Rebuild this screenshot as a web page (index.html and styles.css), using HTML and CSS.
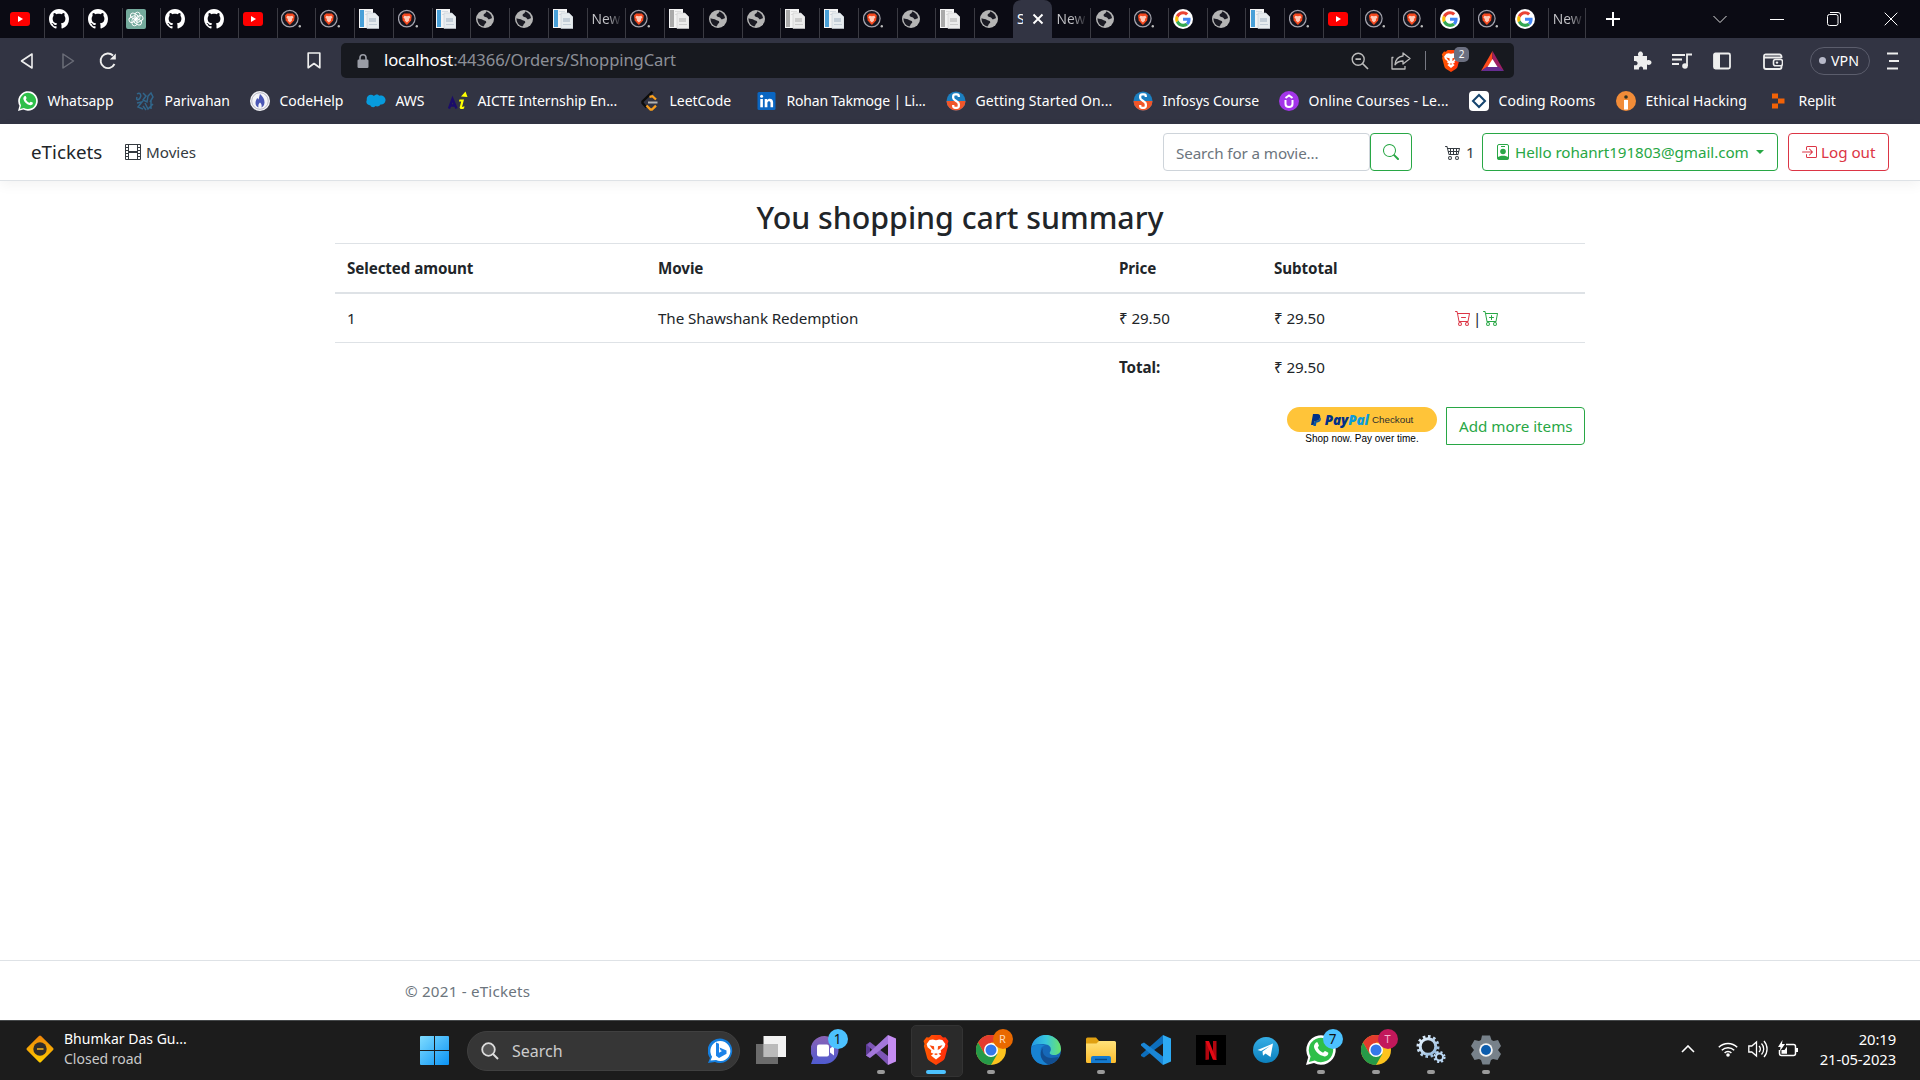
FILE: index.html
```html
<!DOCTYPE html>
<html lang="en">
<head>
<meta charset="utf-8">
<title>Shopping cart - eTickets</title>
<link rel="stylesheet" href="styles.css">
</head>
<body>
<svg class="defs" aria-hidden="true">
  <defs>
    <linearGradient id="g-win" x1="0" y1="0" x2="1" y2="1"><stop offset="0" stop-color="#7fdcff"/><stop offset="1" stop-color="#0a93f5"/></linearGradient>
    <linearGradient id="g-brave" x1="0" x2="1"><stop offset="0" stop-color="#ff5a00"/><stop offset="1" stop-color="#ff2a0c"/></linearGradient>
    <linearGradient id="g-chat" x1="0" y1="0" x2="0" y2="1"><stop offset="0" stop-color="#8a62b4"/><stop offset="1" stop-color="#4f5bd0"/></linearGradient>
    <linearGradient id="g-edge" x1="0" y1="0" x2="1" y2="0"><stop offset="0" stop-color="#2399e6"/><stop offset=".5" stop-color="#37c6dc"/><stop offset="1" stop-color="#6be36a"/></linearGradient>
    <linearGradient id="g-folder" x1="0" y1="0" x2="0" y2="1"><stop offset="0" stop-color="#ffe27a"/><stop offset="1" stop-color="#fcbc2c"/></linearGradient>
    <linearGradient id="g-tg" x1="0" y1="0" x2="0" y2="1"><stop offset="0" stop-color="#35aee6"/><stop offset="1" stop-color="#0c80bd"/></linearGradient>
    <linearGradient id="g-gear" x1="0" y1="0" x2="1" y2="1"><stop offset="0" stop-color="#e8f4ff"/><stop offset="1" stop-color="#8fb6dc"/></linearGradient>
    <linearGradient id="g-diamond" x1="0" y1="0" x2="1" y2="1"><stop offset="0" stop-color="#ee8209"/><stop offset="1" stop-color="#ffce00"/></linearGradient>
  </defs>
  <symbol id="yt" viewBox="0 0 20 20"><rect y="3" width="20" height="14" rx="3" fill="#f00"/><path d="M8 7l5 3-5 3z" fill="#fff"/></symbol>
  <symbol id="gh" viewBox="0 0 16 16"><path fill="#fff" d="M8 0C3.58 0 0 3.58 0 8c0 3.54 2.29 6.53 5.47 7.59.4.07.55-.17.55-.38 0-.19-.01-.82-.01-1.49-2.01.37-2.53-.49-2.69-.94-.09-.23-.48-.94-.82-1.13-.28-.15-.68-.52-.01-.53.63-.01 1.08.58 1.23.82.72 1.21 1.87.87 2.33.66.07-.52.28-.87.51-1.07-1.78-.2-3.64-.89-3.64-3.95 0-.87.31-1.59.82-2.15-.08-.2-.36-1.02.08-2.12 0 0 .67-.21 2.2.82.64-.18 1.32-.27 2-.27.68 0 1.36.09 2 .27 1.53-1.04 2.2-.82 2.2-.82.44 1.1.16 1.92.08 2.12.51.56.82 1.27.82 2.15 0 3.07-1.87 3.75-3.65 3.95.29.25.54.73.54 1.48 0 1.07-.01 1.93-.01 2.2 0 .21.15.46.55.38A8.013 8.013 0 0016 8c0-4.42-3.58-8-8-8z"/></symbol>
  <symbol id="gpt" viewBox="0 0 20 20"><rect width="20" height="20" rx="2" fill="#74aa9c"/><g fill="none" stroke="#fff" stroke-width=".9"><rect x="9" y="3.200" width="5" height="8" rx="2.500"/><rect x="9" y="3.200" width="5" height="8" rx="2.500" transform="rotate(60 10 10)"/><rect x="9" y="3.200" width="5" height="8" rx="2.500" transform="rotate(120 10 10)"/><rect x="9" y="3.200" width="5" height="8" rx="2.500" transform="rotate(180 10 10)"/><rect x="9" y="3.200" width="5" height="8" rx="2.500" transform="rotate(240 10 10)"/><rect x="9" y="3.200" width="5" height="8" rx="2.500" transform="rotate(300 10 10)"/></g></symbol>
  <symbol id="lion" viewBox="0 0 26 30"><path fill="url(#g-brave)" d="M6 2.500L8.500 0h9L20 2.500l2.500-.3L25.500 6l-1 3 .6 2-3.100 11.500c-.5 1.800-1.500 2.700-3 3.800L13 30l-6-3.700c-1.500-1.100-2.500-2-3-3.800L.9 11l.6-2-1-3L3.500 2.200z"/><path fill="#fff" d="M13 5.200l3.200-.7 3.200.5 3 4-1 3.300-3.700 3 .4 2.200-2.600 1.200 2.500 1.700-5 4.200-5-4.200 2.500-1.700-2.600-1.200.4-2.200-3.700-3-1-3.300 3-4 3.200-.5z"/><path fill="#fb4a10" d="M6.500 10.300l4.500.9.300 3.700-2-.8zm13 0l-4.500.9-.3 3.700 2-.8zM11 19l2-.8 2 .8-2 1.200z"/></symbol>
  <symbol id="brave" viewBox="0 0 20 20"><circle cx="8.800" cy="9.600" r="8.300" fill="#161620" stroke="#a3a3ad" stroke-width="1.200"/><path d="M6 4.500h5.800l2 2-.7 5-3.900 4.200h-.7l-3.800-4.200-.7-5z" fill="#f4481e"/><path d="M6.400 6.800l2.500.4 2.500-.4 1 1.700-1.500 1.400.2 1.600-2.200 1.900-2.200-1.900.2-1.600-1.500-1.400z" fill="#ffc9b8"/><circle cx="18.800" cy="17.300" r="1.200" fill="#bbb"/></symbol>
  <symbol id="docb" viewBox="0 0 20 20"><path fill="#f4f4f4" d="M0 0h14v19H0z"/><path fill="#49a0d8" d="M1 1h4v17H1z"/><path fill="#d5dce2" d="M6 2h6v1H6zm0 3h6v1H6z"/><path fill="#e7ecef" stroke="#c5cdd4" stroke-width=".6" d="M8 4h8l4 4v11.500H8z"/><path fill="#c3ced8" d="M10 9h7v4h-7zm0 6h8v1h-8z"/></symbol>
  <symbol id="docg" viewBox="0 0 20 20"><path fill="#f4f4f4" d="M0 0h14v19H0z"/><path fill="#aaa" d="M1 1h4v17H1z"/><path fill="#ddd" d="M6 2h6v1H6zm0 3h6v1H6z"/><path fill="#ececec" stroke="#ccc" stroke-width=".6" d="M8 4h8l4 4v11.500H8z"/><path fill="#ccc" d="M10 9h7v4h-7zm0 6h8v1h-8z"/></symbol>
  <symbol id="globe" viewBox="0 0 20 20"><circle cx="10" cy="10" r="9" fill="#b4b4b4"/><path fill="#1b1b24" d="M11 2.600c3 .6 5.600 3 6 6.400-1 1-2.200.6-3 1.400-1.400-.2-1.200-2-2.600-2.200-1.600-.2-3-.6-2.800-2.200.2-1.400 2.600-1.200 2.400-3.400zM2.500 9.200c2 1 4 .6 5.600 1.700 1.200 1 3.200.5 3.200 2.300-.2 1.400-1.700 1.300-1.900 2.700-.1.800-.9 1-1.100 1.500C5 16.800 2.300 13.300 2.500 9.200z"/></symbol>
  <symbol id="goog" viewBox="0 0 56 56"><circle cx="28" cy="28" r="28" fill="#fff"/><g transform="translate(6 6) scale(.92)"><path fill="#EA4335" d="M24 9.500c3.540 0 6.710 1.220 9.210 3.600l6.850-6.850C35.900 2.380 30.470 0 24 0 14.620 0 6.510 5.380 2.560 13.220l7.980 6.190C12.430 13.720 17.740 9.500 24 9.500z"/><path fill="#4285F4" d="M46.980 24.550c0-1.570-.15-3.090-.38-4.550H24v9.020h12.940c-.58 2.960-2.260 5.480-4.780 7.180l7.730 6c4.510-4.180 7.090-10.360 7.090-17.650z"/><path fill="#FBBC05" d="M10.530 28.590c-.48-1.450-.76-2.990-.76-4.590s.27-3.140.76-4.590l-7.980-6.190C.92 16.460 0 20.120 0 24c0 3.880.92 7.540 2.560 10.780l7.970-6.190z"/><path fill="#34A853" d="M24 48c6.480 0 11.930-2.130 15.890-5.810l-7.730-6c-2.150 1.450-4.920 2.300-8.160 2.300-6.260 0-11.570-4.220-13.470-9.910l-7.980 6.190C6.510 42.620 14.620 48 24 48z"/></g></symbol>
  <symbol id="wa" viewBox="0 0 30 30"><path fill="#fff" d="M0 30l2.200-7.800A14.700 14.700 0 1 1 8 27.900z"/><path fill="#2fbf4a" d="M3 27l1.600-5.600a12.200 12.200 0 1 1 4.200 4.100z"/><path fill="#fff" d="M10.200 7.500c.6-.3 1.300-.2 1.500.3l1.200 2.800c.1.500-1 1.700-1.100 2.100 1 2.300 2.800 4 5.300 5 .6-.2 1.400-1.800 2-1.700l2.900 1.400c.5.300.3 1.500 0 2.200-.5 1-2.200 2-3.500 1.800-5.400-.8-9.300-4.600-10.500-9.300-.3-1.700.9-4 2.200-4.600z"/></symbol>
  <symbol id="info" viewBox="0 0 20 20"><circle cx="10" cy="10" r="9.500" fill="#1c7fc0"/><path d="M.5 10a9.500 9.500 0 0 0 19 0z" fill="#f0562a"/><path d="M12.800 6V5.200a1.800 1.800 0 0 0-1.800-1.800H9A1.800 1.800 0 0 0 7.200 5.200V7C7.200 9.500 12.800 10 12.800 13v2A1.800 1.800 0 0 1 11 16.800H9A1.800 1.800 0 0 1 7.200 15v-1" fill="none" stroke="#fff" stroke-width="2.300"/></symbol>
  <symbol id="chromei" viewBox="0 0 30 30"><circle cx="15" cy="15" r="15" fill="#fcc31e"/><path fill="#e33b2e" d="M2 7.500a15 15 0 0 1 26 0H15L8.500 18.700z"/><path fill="#269a48" d="M2 7.500l6.500 11.200L21.500 18.700 15 30A15 15 0 0 1 2 7.500z"/><circle cx="15" cy="15" r="7" fill="#fff"/><circle cx="15" cy="15" r="5.500" fill="#3478ea"/></symbol>
  <symbol id="cartbase" viewBox="0 0 16 16"><path fill="currentColor" d="M.5 1a.5.5 0 0 0 0 1h1.110l.401 1.607 1.498 7.985A.5.5 0 0 0 4 12h1a2 2 0 1 0 0 4 2 2 0 0 0 0-4h7a2 2 0 1 0 0 4 2 2 0 0 0 0-4h1a.5.5 0 0 0 .491-.408l1.500-8A.5.5 0 0 0 14.500 3H2.890l-.405-1.621A.5.5 0 0 0 2 1H.5zm3.915 10L3.102 4h10.796l-1.313 7h-8.170zM6 14a1 1 0 1 1-2 0 1 1 0 0 1 2 0zm7 0a1 1 0 1 1-2 0 1 1 0 0 1 2 0z"/></symbol>
</svg>

<header class="browser">
  <div class="tabs">
    <div class="tab"><svg><use href="#yt"/></svg></div>
    <div class="tab"><svg><use href="#gh"/></svg></div>
    <div class="tab"><svg><use href="#gh"/></svg></div>
    <div class="tab"><svg><use href="#gpt"/></svg></div>
    <div class="tab"><svg><use href="#gh"/></svg></div>
    <div class="tab"><svg><use href="#gh"/></svg></div>
    <div class="tab"><svg><use href="#yt"/></svg></div>
    <div class="tab"><svg><use href="#brave"/></svg></div>
    <div class="tab"><svg><use href="#brave"/></svg></div>
    <div class="tab"><svg><use href="#docb"/></svg></div>
    <div class="tab"><svg><use href="#brave"/></svg></div>
    <div class="tab"><svg><use href="#docb"/></svg></div>
    <div class="tab"><svg><use href="#globe"/></svg></div>
    <div class="tab"><svg><use href="#globe"/></svg></div>
    <div class="tab"><svg><use href="#docb"/></svg></div>
    <div class="tab"><span class="tab-title">New</span></div>
    <div class="tab"><svg><use href="#brave"/></svg></div>
    <div class="tab"><svg><use href="#docg"/></svg></div>
    <div class="tab"><svg><use href="#globe"/></svg></div>
    <div class="tab"><svg><use href="#globe"/></svg></div>
    <div class="tab"><svg><use href="#docg"/></svg></div>
    <div class="tab"><svg><use href="#docb"/></svg></div>
    <div class="tab"><svg><use href="#brave"/></svg></div>
    <div class="tab"><svg><use href="#globe"/></svg></div>
    <div class="tab"><svg><use href="#docg"/></svg></div>
    <div class="tab"><svg><use href="#globe"/></svg></div>
    <div class="tab active"><span class="cut">S</span><svg class="close" viewBox="0 0 12 12"><path d="M1.500 1.500l9 9m0-9l-9 9" stroke="#fff" stroke-width="1.900"/></svg></div>
    <div class="tab after-active"><span class="tab-title">New</span></div>
    <div class="tab"><svg><use href="#globe"/></svg></div>
    <div class="tab"><svg><use href="#brave"/></svg></div>
    <div class="tab"><svg><use href="#goog"/></svg></div>
    <div class="tab"><svg><use href="#globe"/></svg></div>
    <div class="tab"><svg><use href="#docb"/></svg></div>
    <div class="tab"><svg><use href="#brave"/></svg></div>
    <div class="tab narrow"><svg><use href="#yt"/></svg></div>
    <div class="tab narrow"><svg><use href="#brave"/></svg></div>
    <div class="tab narrow"><svg><use href="#brave"/></svg></div>
    <div class="tab narrow"><svg><use href="#goog"/></svg></div>
    <div class="tab narrow"><svg><use href="#brave"/></svg></div>
    <div class="tab narrow"><svg><use href="#goog"/></svg></div>
    <div class="tab narrow"><span class="tab-title">New</span></div>
    <div class="tab new-tab"><svg viewBox="0 0 16 16"><path d="M8 1v14M1 8h14" stroke="#fff" stroke-width="2"/></svg></div>
    <div class="window-controls">
      <svg viewBox="0 0 14 14"><path d="M.5 4L7 10.500 13.500 4" fill="none" stroke="#ddd"/></svg>
      <svg viewBox="0 0 14 14"><path d="M0 7.500h14" stroke="#fff"/></svg>
      <svg viewBox="0 0 14 14"><g fill="none" stroke="#fff"><rect x=".5" y="2.500" width="10.500" height="11" rx="2"/><path d="M3 .5h8a2.500 2.500 0 0 1 2.500 2.500v8"/></g></svg>
      <svg viewBox="0 0 14 14"><path d="M.7.7l12.600 12.600M13.300.7L.7 13.300" stroke="#fff"/></svg>
    </div>
  </div>

  <div class="toolbar">
    <div class="nav-icons">
      <svg viewBox="0 0 20 20"><path d="M14 3v14L3.500 10z" fill="none" stroke="#eee" stroke-width="1.600" stroke-linejoin="round"/></svg>
      <svg viewBox="0 0 20 20"><path d="M5 3v14l10.500-7z" fill="none" stroke="#6b6d78" stroke-width="1.500" stroke-linejoin="round"/></svg>
      <svg viewBox="0 0 20 20"><path d="M16.500 13A7.300 7.300 0 1 1 15 4.500" fill="none" stroke="#eee" stroke-width="1.900"/><path d="M17.800 2.500v6h-6z" fill="#eee"/></svg>
    </div>
    <svg class="bookmark-icon" viewBox="0 0 14 17"><path d="M1.200 1h11.600v14.700L7 11.500l-5.800 4.200z" fill="none" stroke="#eee" stroke-width="1.700" stroke-linejoin="round"/></svg>
    <div class="address">
      <svg class="lock" viewBox="0 0 12 14"><path d="M3 6V3.800a3 3 0 0 1 6 0V6" fill="none" stroke="#9a9da6" stroke-width="1.600"/><rect x=".5" y="5.500" width="11" height="8.500" rx="1.200" fill="#9a9da6"/></svg>
      <span class="url"><b>localhost</b>:44366/Orders/ShoppingCart</span>
      <div class="address-actions">
        <svg class="zoomout" viewBox="0 0 18 18"><g fill="none" stroke="#bbb" stroke-width="1.400"><circle cx="7.200" cy="7.200" r="6"/><path d="M4.500 7.200h5.400M11.500 11.500l5.500 5.500" stroke-width="1.700"/></g></svg>
        <svg class="share" viewBox="0 0 20 18"><g fill="none" stroke="#bbb" stroke-width="1.300" stroke-linejoin="round"><path d="M2.500 5.500H1V17h13v-3"/><path d="M12 1l7 5.500-7 5.500V9c-4 0-6 .8-8 3.800C4.500 7.500 7.500 4.500 12 4z"/></g></svg>
        <i class="bar"></i>
        <span class="shield"><svg><use href="#lion"/></svg><em>2</em></span>
        <svg class="bat" viewBox="0 0 23 20"><path d="M11.500 0L0 20l11.500-7z" fill="#ff4b1c"/><path d="M11.500 0L23 20l-11.500-7z" fill="#9e1f63"/><path d="M0 20h23l-6-4.500H6z" fill="#662d91"/><path d="M11.500 8l5 8h-10z" fill="#fff"/></svg>
      </div>
    </div>
    <div class="tool-icons">
      <svg viewBox="0 0 20 20"><path fill="#eee" d="M2 5h4.500c-1.300-2 0-4.500 2-4.500s3.300 2.500 2 4.500H15v4.500c2-1.200 4.500 0 4.500 2s-2.500 3.200-4.500 2V18.500h-4c.5-2-.7-3-2-3s-2.500 1-2 3H2v-4.300c2.500.6 3.600-.7 3.600-2S4.500 9.500 2 10z"/></svg>
      <svg viewBox="0 0 20 20"><path d="M0 4h13M0 8.500h10M0 13h7M15 15V3.500h5" fill="none" stroke="#eee" stroke-width="1.800"/><circle cx="13" cy="15" r="2.800" fill="#eee"/></svg>
      <svg viewBox="0 0 20 20"><rect x="2" y="2.500" width="16" height="15" rx="1.500" fill="none" stroke="#eee" stroke-width="1.800"/><path d="M2 2.500h6v15H2z" fill="#eee"/></svg>
      <svg class="wallet" viewBox="0 0 20 20"><path d="M18.500 7V5.500a2 2 0 0 0-2-2H3A1.700 1.700 0 0 0 1 5v11a2 2 0 0 0 2 2h13.500a2 2 0 0 0 2-2v-1.500M1 6.500h17.500" fill="none" stroke="#eee" stroke-width="1.800"/><rect x="10.500" y="8.500" width="9" height="6.200" rx="2" fill="#323443" stroke="#eee" stroke-width="1.600"/><circle cx="14" cy="11.600" r="1.200" fill="#eee"/></svg>
    </div>
    <div class="vpn"><i></i>VPN</div>
    <svg class="menu" viewBox="0 0 12 18"><path d="M0 1.500h11M2 9h10M0 16.500h11" stroke="#eee" stroke-width="1.800"/></svg>
  </div>

  <nav class="bookmarks">
    <a><svg><use href="#wa"/></svg><span>Whatsapp</span></a>
    <a><svg viewBox="0 0 20 20"><g fill="none" stroke="#31668b" stroke-width="1.500"><path d="M2 3c3-2 5 1 3 4S1 9 2 6M8 2l3 3-3 4 4 2 1-6 3-3 2 4-3 5M2 12l5-1-4 5 5 2M10 12l3 6 5-5M8 15l3 4M16 9v9"/></g></svg><span>Parivahan</span></a>
    <a><svg viewBox="0 0 20 20"><circle cx="10" cy="10" r="10" fill="#f4f4f8"/><circle cx="10" cy="10" r="8.300" fill="none" stroke="#a8a8b8" stroke-width=".8"/><path d="M10 3c3 3 4.500 5 4.500 8.500C14.500 14 13 16 11.500 16.500 12 14 11.500 13 10 11.500 8.500 13 8 14 8.500 16.500 6.500 16 5.500 14 5.500 12c0-2.500 1-3.500 1.700-5l1.300 1.500z" fill="#4b57b5"/></svg><span>CodeHelp</span></a>
    <a><svg viewBox="0 0 20 20"><path d="M8 5c1.500-2 4-2 5.200-.2C16 3.500 20 6 19.500 9.500c-.3 3-3 4.500-5 4-1 2-3.500 2.500-5 1.500-2 2.200-4.500 1-5.300-.8C1 14.500-.5 11.500.8 9 0 5 4.500 2 8 5z" fill="#079bdd"/></svg><span>AWS</span></a>
    <a><svg viewBox="0 0 20 20"><path d="M1 17.500L4.500 8l4 9.500M2 14.500h5" stroke="#1b0b6b" stroke-width="2.400" fill="none"/><path d="M13 5.500L17.500.5 19.500 6zM11.500 8.500h4.500l-2 7.500 2.500-.8-.5 2.300c-2 .8-4.500 1-4.300-1.200l1.500-5.800h-2.200z" fill="#ff0"/></svg><span class="tight">AICTE Internship En...</span></a>
    <a><svg viewBox="0 0 20 20"><path d="M12.500.8L2.500 10.500v1.500l4 4.500" fill="none" stroke="#0c0c0c" stroke-width="2.400"/><path d="M9.500 5.800l3-.6 3.500 3.300M6.500 14.500l4 4h1.500l4-3.800" fill="none" stroke="#fa9f1c" stroke-width="2.300"/><path d="M8 11.500h9.500" stroke="#b3b3b3" stroke-width="2"/></svg><span>LeetCode</span></a>
    <a><svg viewBox="0 0 20 20"><rect x=".5" y="1" width="18" height="18" rx="1.500" fill="#0a66c2"/><path fill="#fff" d="M3.300 8h2.600v8.300H3.300z"/><circle cx="4.600" cy="5.300" r="1.500" fill="#fff"/><path fill="#fff" d="M7.700 8h2.500v1.200c1.500-2.300 5.900-1.800 5.900 2v5.100h-2.600v-4.500c0-2.200-3.100-2.100-3.100.1v4.400H7.700z"/></svg><span class="tighter">Rohan Takmoge | Li...</span></a>
    <a><svg><use href="#info"/></svg><span class="wide">Getting Started On...</span></a>
    <a><svg><use href="#info"/></svg><span>Infosys Course</span></a>
    <a><svg viewBox="0 0 20 20"><circle cx="10" cy="10" r="10" fill="#a335e8"/><path d="M6.500 9v4c0 4 7 4 7 0V9M6.500 7L10 4.500 13.500 7" fill="none" stroke="#fff" stroke-width="2"/></svg><span class="wide">Online Courses - Le...</span></a>
    <a><svg viewBox="0 0 20 20"><rect width="20" height="20" rx="4" fill="#fff"/><path d="M10 4l6 6-6 6-6-6z" fill="none" stroke="#15446e" stroke-width="2"/></svg><span class="wide">Coding Rooms</span></a>
    <a><svg viewBox="0 0 20 20"><circle cx="10" cy="10" r="10" fill="#f28c38"/><circle cx="10" cy="6" r="1.800" fill="#332"/><path d="M8 9h4v9.500H8z" fill="#fff"/></svg><span class="wide">Ethical Hacking</span></a>
    <a><svg viewBox="0 0 20 20"><path d="M3 2.500h6v5H3zM9 7.500h6.500v5H9zM3 12.500h6v5H3z" fill="#f26207"/></svg><span>Replit</span></a>
  </nav>
</header>

<div class="page">
  <nav class="navbar">
    <a class="brand">eTickets</a>
    <a class="nav-link"><svg class="bi" viewBox="0 0 16 16"><path fill="currentColor" d="M0 1a1 1 0 0 1 1-1h14a1 1 0 0 1 1 1v14a1 1 0 0 1-1 1H1a1 1 0 0 1-1-1V1zm4 0v6h8V1H4zm8 8H4v6h8V9zM1 1v2h2V1H1zm2 3H1v2h2V4zM1 7v2h2V7H1zm2 3H1v2h2v-2zm-2 3v2h2v-2H1zM15 1h-2v2h2V1zm-2 3v2h2V4h-2zm2 3h-2v2h2V7zm-2 3v2h2v-2h-2zm2 3h-2v2h2v-2z"/></svg>Movies</a>
    <form class="search">
      <div class="field">Search for a movie...</div>
      <div class="btn success"><svg class="bi" viewBox="0 0 16 16"><path fill="currentColor" d="M11.742 10.344a6.500 6.500 0 1 0-1.397 1.398h-.001c.03.04.062.078.098.115l3.850 3.850a1 1 0 0 0 1.415-1.414l-3.850-3.850a1.007 1.007 0 0 0-.115-.1zM12 6.500a5.500 5.500 0 1 1-11 0 5.500 5.500 0 0 1 11 0z"/></svg></div>
    </form>
    <a class="cart-count"><svg class="bi" viewBox="0 0 16 16"><path fill="currentColor" d="M0 2.500A.5.5 0 0 1 .5 2H2a.5.5 0 0 1 .485.379L2.890 4H14.500a.5.5 0 0 1 .485.621l-1.500 6A.5.5 0 0 1 13 11H4a.5.5 0 0 1-.485-.379L1.610 3H.5a.5.5 0 0 1-.5-.5zM3.140 5l.5 2H5V5H3.140zM6 5v2h2V5H6zm3 0v2h2V5H9zm3 0v2h1.360l.5-2H12zm1.110 3H12v2h.61l.5-2zM11 8H9v2h2V8zM8 8H6v2h2V8zM5 8H3.890l.5 2H5V8zm0 5a1 1 0 1 0 0 2 1 1 0 0 0 0-2zm-2 1a2 2 0 1 1 4 0 2 2 0 0 1-4 0zm9-1a1 1 0 1 0 0 2 1 1 0 0 0 0-2zm-2 1a2 2 0 1 1 4 0 2 2 0 0 1-4 0z"/></svg>1</a>
    <div class="btn success user"><svg class="bi" viewBox="0 0 16 16"><rect x="2.500" y=".5" width="11" height="15" rx="1.500" fill="none" stroke="currentColor"/><path d="M6 2.500h4" stroke="currentColor"/><circle cx="8" cy="7.500" r="2.800" fill="currentColor"/><path d="M2.500 13.500c2-2.500 9-2.500 11 0v2h-11z" fill="currentColor"/></svg><span>Hello rohanrt191803@gmail.com</span><i class="caret"></i></div>
    <div class="btn danger logout"><svg class="bi" viewBox="0 0 16 16"><path fill="currentColor" d="M6 3.500a.5.5 0 0 1 .5-.5h8a.5.5 0 0 1 .5.5v9a.5.5 0 0 1-.5.5h-8a.5.5 0 0 1-.5-.5v-2a.5.5 0 0 0-1 0v2A1.500 1.500 0 0 0 6.500 14h8a1.500 1.500 0 0 0 1.500-1.500v-9A1.500 1.500 0 0 0 14.500 2h-8A1.500 1.500 0 0 0 5 3.500v2a.5.5 0 0 0 1 0v-2z"/><path fill="currentColor" d="M11.854 8.354a.5.5 0 0 0 0-.708l-3-3a.5.5 0 1 0-.708.708L10.293 7.500H1.500a.5.5 0 0 0 0 1h8.793l-2.147 2.146a.5.5 0 0 0 .708.708l3-3z"/></svg><span>Log out</span></div>
  </nav>

  <main class="content">
    <h2>You shopping cart summary</h2>
    <table class="cart">
      <colgroup><col class="c1"><col class="c2"><col class="c3"><col class="c4"><col class="c5"></colgroup>
      <thead><tr><th>Selected amount</th><th>Movie</th><th>Price</th><th>Subtotal</th><th></th></tr></thead>
      <tbody>
        <tr><td>1</td><td>The Shawshank Redemption</td><td>₹ 29.50</td><td>₹ 29.50</td>
          <td><div class="row-actions"><svg class="bi minus" viewBox="0 0 16 16"><use href="#cartbase"/><path fill="currentColor" d="M6.500 7a.5.5 0 0 0 0 1h4a.5.5 0 0 0 0-1h-4z"/></svg><span>|</span><svg class="bi plus" viewBox="0 0 16 16"><use href="#cartbase"/><path fill="currentColor" d="M9 5.500a.5.5 0 0 0-1 0V7H6.500a.5.5 0 0 0 0 1H8v1.500a.5.5 0 0 0 1 0V8h1.500a.5.5 0 0 0 0-1H9V5.500z"/></svg></div></td></tr>
        <tr><td></td><td></td><td><b>Total:</b></td><td>₹ 29.50</td><td></td></tr>
      </tbody>
    </table>
    <div class="checkout">
      <div class="paypal">
        <div class="paypal-btn">
          <svg viewBox="0 0 10 12"><path fill="#003087" d="M2 0h4.300c2.500 0 3.300 1.600 2.800 3.600C8.600 6 7 7 4.800 7H3.500l-.8 4H0z"/><path fill="#0b56a0" d="M3.500 7h1.300C7 7 8.600 6 9.200 3.300 10.500 4.500 10 8.500 6.300 8.500H5.500L4.800 12H2.300z"/></svg>
          <span class="pp"><b>Pay</b><b class="pal">Pal</b></span><span class="co">Checkout</span>
        </div>
        <div class="paypal-note">Shop now. Pay over time.</div>
      </div>
      <div class="btn success add">Add more items</div>
    </div>
  </main>

  <footer class="footer">© 2021 - eTickets</footer>
</div>

<div class="taskbar">
  <div class="widget">
    <svg viewBox="0 0 30 30"><rect x="5" y="5" width="20" height="20" rx="1.500" transform="rotate(45 15 15)" fill="url(#g-diamond)"/><circle cx="15" cy="15" r="6.700" fill="#2f2c2c"/><path d="M12 15h6.500" stroke="#f9b61a" stroke-width="1.500"/></svg>
    <div><p>Bhumkar Das Gu...</p><p class="sub">Closed road</p></div>
  </div>
  <svg class="start" viewBox="0 0 29 29"><path fill="url(#g-win)" d="M1 0h13v14H0V1a1 1 0 0 1 1-1zM15 0h13a1 1 0 0 1 1 1v13H15zM0 15h14v14H1a1 1 0 0 1-1-1zM15 15h14v13a1 1 0 0 1-1 1H15z"/></svg>
  <div class="taskbar-search">
    <svg class="mag" viewBox="0 0 18 18"><circle cx="7.500" cy="7.500" r="6.300" fill="#555" stroke="#ddd" stroke-width="1.800"/><path d="M12 12l5 5" stroke="#ddd" stroke-width="2"/></svg>
    <span>Search</span>
    <svg class="bing" viewBox="0 0 25 25"><path d="M0 25l2-5a12.300 12.300 0 1 1 5 4z" fill="#147ede"/><path d="M2.500 22.500l1.600-3.800a10 10 0 1 1 4 3.400z" fill="#fff"/><path d="M8 4.500l3 1.200v9l3-1.700-1.500-.8-1-2.700 7 3v3.200L11 20l-3-2.200z" fill="#1c82e8"/></svg>
  </div>
  <div class="apps">
    <div class="app"><svg viewBox="0 0 30 30"><path d="M7.500 1h22.500v21H7.500z" fill="#f2f2f2"/><path d="M0 9h22v20H0z" fill="#808080" opacity=".8"/><path d="M7.500 9H22v13H7.500z" fill="#bbb"/></svg></div>
    <div class="app"><svg viewBox="0 0 30 30"><path d="M0 29l2-6a14 14 0 1 1 12 6z" fill="url(#g-chat)"/><rect x="6" y="9.500" width="12" height="12" rx="2" fill="#fff"/><path d="M19 13.500l4-3v10l-4-3z" fill="#fff"/></svg><em class="badge blue">1</em></div>
    <div class="app running"><svg viewBox="0 0 30 30"><path d="M0 9.500L4 7v16l-4-2.500z" fill="#5c3a94"/><path d="M4 7l18 14v9L1 10z" fill="#7d55b5"/><path d="M0 20.500L22 0v9L4 23z" fill="#a377da"/><path d="M22 0l8 3.500v23L22 30z" fill="#c58df2"/></svg></div>
    <div class="app current"><svg viewBox="0 0 26 30"><use href="#lion"/></svg></div>
    <div class="app running"><svg><use href="#chromei"/></svg><em class="badge orange">R</em></div>
    <div class="app"><svg viewBox="0 0 30 30"><circle cx="15" cy="15" r="15" fill="#1668b8"/><path d="M.3 12A15 15 0 0 1 30 14c0 4-4 6.500-8 6-2.500-.3-4-1.500-3-3 2-3 .5-7-4-7.500C9 8.500 4 9 .3 12z" fill="url(#g-edge)"/><path d="M.2 12.500C5 8 11 9 14 11c-4 0-5 3-4 7 1 5 6 8.500 12 6.500-3 6-9 6-13 4.300C3 26.500-.8 20 .2 12.500z" fill="#1883d2"/><path d="M12 13c-1 3 0 8 5 9.500 3 1 7 0 10.700-.5A15 15 0 0 1 18 29.700C10 27 7 18 12 13z" fill="#124e91"/></svg></div>
    <div class="app running"><svg viewBox="0 0 30 30"><path d="M0 4a1.500 1.500 0 0 1 1.500-1.500H10L13 6v5H0z" fill="#e0a011"/><path d="M0 8.500h10.500L13 6h15.500A1.500 1.500 0 0 1 30 7.500v19a1.500 1.500 0 0 1-1.500 1.500h-27A1.500 1.500 0 0 1 0 26.500z" fill="url(#g-folder)"/><path d="M5 28v-5a2 2 0 0 1 2-2h16a2 2 0 0 1 2 2v5z" fill="#157bd0"/><path d="M9 24.500h12" stroke="#064a88" stroke-width="1.400"/></svg></div>
    <div class="app"><svg viewBox="0 0 30 30"><path d="M22 0v8.500L3 22.500 0 21v-1.500z" fill="#0d6ebc"/><path d="M0 10.500V9l3-1.500 19 14V30z" fill="#1a86d6"/><path d="M22 0l8 3.500v23L22 30z" fill="#2daaf3"/></svg></div>
    <div class="app"><svg viewBox="0 0 30 30"><path d="M0 0h30v30H0z" fill="#000"/><path d="M9.500 6H13v18.500l-3.500.5zM17 6h3.500v19l-3.500-.5z" fill="#b1060f"/><path d="M9.500 6H13l7.500 19-3.700-.5z" fill="#e50914"/></svg></div>
    <div class="app"><svg viewBox="0 0 30 30"><circle cx="15" cy="15" r="13" fill="url(#g-tg)"/><path d="M6.500 15L22 8.500 19.500 22l-5-3.500-2.500 2.300-.5-4.300L19 11l-9 5z" fill="#fff"/></svg></div>
    <div class="app running"><svg><use href="#wa"/></svg><em class="badge blue">7</em></div>
    <div class="app running"><svg><use href="#chromei"/></svg><em class="badge pink">T</em></div>
    <div class="app running"><svg viewBox="0 0 30 30"><circle cx="12" cy="11.500" r="10" fill="none" stroke="url(#g-gear)" stroke-width="3" stroke-dasharray="2.600 2.600"/><circle cx="12" cy="11.500" r="7.800" fill="none" stroke="url(#g-gear)" stroke-width="3"/><circle cx="23.500" cy="22" r="5" fill="none" stroke="#bcd9f5" stroke-width="2.200" stroke-dasharray="2 2"/><circle cx="23.500" cy="22" r="3.500" fill="none" stroke="#bcd9f5" stroke-width="2"/></svg></div>
    <div class="app running"><svg viewBox="0 0 30 30"><path d="M11 .5h8l1.500 4.500 2 1 4.500-1L30 11l-3 4 3 4-3.500 6-4.500-1-2 1-1.500 4.500h-7L10 25l-2-1-4.500 1L0 19l3-4-3-4 3.500-6L8 6l2-1z" fill="#77818a"/><circle cx="15" cy="15" r="6.800" fill="#f4f4f4"/><circle cx="15" cy="15" r="5" fill="#0b5cad"/></svg></div>
  </div>
  <div class="tray">
    <svg class="chev" viewBox="0 0 14 8"><path d="M1 7l6-6 6 6" fill="none" stroke="#fff" stroke-width="1.600"/></svg>
    <svg class="wifi" viewBox="0 0 20 16"><g fill="none" stroke="#fff" stroke-width="1.500"><path d="M.8 6.200a13 13 0 0 1 18.400 0M3.800 9.200a8.800 8.800 0 0 1 12.400 0M6.600 12a4.800 4.800 0 0 1 6.800 0"/></g><circle cx="10" cy="14" r="1.800" fill="#fff"/></svg>
    <svg class="sound" viewBox="0 0 20 18"><g fill="none" stroke="#fff" stroke-width="1.300"><path d="M.8 6h3L8.500 2v14L3.800 12h-3z"/><path d="M11 6a4 4 0 0 1 0 6M13.500 3.500a8 8 0 0 1 0 11M16 1a12 12 0 0 1 0 16"/></g></svg>
    <svg class="battery" viewBox="0 0 20 18"><path d="M8 4.500h7.500a2 2 0 0 1 2 2v7a2 2 0 0 1-2 2h-12a2 2 0 0 1-2-2V10" fill="none" stroke="#fff" stroke-width="1.500"/><path d="M18 8h2v4h-2zM3.500 13.800V10h3L9 6.500v7.300zM4.500 0L0 7h2.500L2 11l5-7H4z" fill="#fff"/></svg>
    <div class="clock"><p>20:19</p><p>21-05-2023</p></div>
  </div>
</div>
</body>
</html>
```
FILE: styles.css
```css
* { box-sizing: border-box; }
body {
  margin: 0;
  width: 1920px;
  height: 1080px;
  overflow: hidden;
  display: flex;
  flex-direction: column;
  font-family: "Noto Sans", "Open Sans", sans-serif;
  font-size: 15.2px;
  color: #212529;
  background: #fff;
}
p, h2 { margin: 0; }
svg { display: block; flex: none; }
em, i { font-style: normal; }
.defs { position: absolute; width: 0; height: 0; }

/* browser chrome */
.browser { flex: none; height: 124px; background: #323443; color: #fff; }
.tabs { display: flex; height: 38px; padding-left: 5.400px; background: #0b0b14; }
.tab { width: 38.750px; flex: none; padding: 9px 0 0 3.800px; border-left: 1px solid transparent; border-image: linear-gradient(to bottom, transparent 9px, #3a3a42 9px) 1; }
.tab:first-child, .tab.active, .tab.after-active { border-image: none; }
.tab.narrow { width: 37.500px; }
.tab svg { width: 20px; height: 20px; }
.tab-title { display: block; font-size: 13.800px; line-height: 20px; width: 29px; overflow: hidden; background: linear-gradient(to right, #c4c4c8 55%, #2a2a32 100%); background-clip: text; color: transparent; }
.tab.active { display: flex; gap: 9px; background: #323443; border: 0; border-radius: 8px 8px 0 0; padding-left: 4px; }
.tab .cut { width: 6px; overflow: hidden; font-size: 14px; line-height: 20px; }
.tab .close { width: 12px; height: 12px; margin-top: 4px; }
.tab.new-tab { width: 46px; padding: 11px 0 0 19px; }
.tab.new-tab svg { width: 16px; height: 16px; }
.window-controls { margin-left: auto; display: flex; gap: 43px; padding: 12px 22px 0 0; }
.window-controls svg { width: 14px; height: 14px; }

.toolbar { display: flex; align-items: center; height: 45px; padding-left: 18px; }
.nav-icons { display: flex; gap: 20px; width: 289px; }
.nav-icons svg { width: 20px; height: 20px; }
.bookmark-icon { width: 14px; height: 17px; margin-right: 20px; }
.address { display: flex; align-items: center; width: 1173px; height: 35px; padding: 0 10px 0 16px; background: #17191f; border-radius: 5px; }
.lock { width: 12px; height: 14px; margin-right: 15px; }
.url { font-size: 16.600px; line-height: 22px; margin-top: -1px; color: #8c8f97; letter-spacing: -.1px; }
.url b { font-weight: 400; color: #fff; }
.address-actions { margin-left: auto; display: flex; align-items: center; }
.zoomout { width: 18px; height: 18px; margin-right: 22px; }
.share { width: 20px; height: 18px; margin-right: 14px; }
.bar { width: 1px; height: 19px; background: #777983; margin-right: 15px; }
.shield { position: relative; width: 28px; height: 22px; margin-right: 12px; }
.shield svg { width: 20px; height: 22px; }
.shield em { position: absolute; left: 13px; top: -3px; width: 15px; height: 15px; border-radius: 5px; background: #6b6f80; font-size: 10px; line-height: 15px; text-align: center; }
.bat { width: 23px; height: 20px; }
.tool-icons { display: flex; gap: 20px; margin-left: 118px; width: 167px; }
.tool-icons svg { width: 20px; height: 20px; }
.tool-icons .wallet { margin-left: 11px; }
.vpn { display: flex; align-items: center; gap: 5px; margin-left: 11px; width: 60px; height: 28px; padding-left: 8px; border: 1px solid #5b5d6c; border-radius: 14px; font-size: 14.200px; letter-spacing: .1px; }
.vpn i { width: 7px; height: 7px; border-radius: 50%; background: #b7b9c9; }
.menu { width: 12px; height: 18px; margin-left: 17px; }

.bookmarks { display: grid; grid-template-columns: 117px 115px 116px 82px 192px 117px 189px 187px 146px 190px 147px 153px 80px; align-items: center; height: 35px; padding-left: 18px; }
.bookmarks a { display: flex; align-items: center; gap: 9.500px; white-space: nowrap; font-size: 14px; letter-spacing: -.05px; }
.bookmarks .tight { letter-spacing: -.08px; }
.bookmarks .tighter { letter-spacing: -.2px; }
.bookmarks .wide { letter-spacing: .08px; }
.bookmarks svg { width: 20px; height: 20px; }

/* site */
.page { flex: 1; display: flex; flex-direction: column; min-height: 0; }
.navbar { display: flex; align-items: center; flex: none; height: 57px; padding: 0 31px; border-bottom: 1px solid #dee2e6; box-shadow: 0 4px 12px rgba(0,0,0,.05); }
.bi { width: 16px; height: 16px; }
.brand { width: 94px; font-size: 18.800px; }
.nav-link, .cart-count { display: flex; align-items: center; gap: 5px; color: #343a40; }
.search { display: flex; margin-left: auto; }
.field { display: flex; align-items: center; width: 207px; height: 38px; padding: 2px 0 0 12px; border: 1px solid #ced4da; border-radius: 4px; color: #6c757d; letter-spacing: -.1px; }
.btn { display: flex; align-items: center; height: 38px; border: 1px solid; border-radius: 4px; padding: 0 12px; white-space: nowrap; }
.success { color: #28a745; }
.danger { color: #dc3545; }
.search .btn { width: 42px; }
.cart-count { width: 37px; margin-left: 33px; }
.user { width: 296px; gap: 4px; letter-spacing: -.06px; }
.caret { border: 4.500px solid transparent; border-top-color: currentColor; border-bottom: 0; margin-left: auto; margin-right: 1px; }
.logout { width: 101px; margin-left: 10px; gap: 4px; }

.content { width: 1250px; margin: 18px auto 0; flex: 1; }
.content h2 { font-size: 30.300px; font-weight: 500; line-height: 38px; text-align: center; margin-bottom: 6px; }
.cart { width: 100%; table-layout: fixed; border-collapse: separate; border-spacing: 0; line-height: 24px; letter-spacing: -.1px; }
.c1 { width: 311px; } .c2 { width: 461px; } .c3 { width: 155px; } .c4 { width: 181px; }
.cart th, .cart td { height: 49px; padding: 12px; text-align: left; border-top: 1px solid #dee2e6; }
.cart th { height: 51px; border-bottom: 2px solid #dee2e6; font-weight: 700; }
.cart tbody tr:first-child td { height: 48px; border-top: 0; }
.row-actions { display: flex; align-items: center; gap: 2px; height: 24px; }
.minus { color: #dc3545; } .plus { color: #28a745; }
.checkout { display: flex; justify-content: flex-end; gap: 9px; margin-top: 16px; }
.paypal { width: 150px; font-family: "Liberation Sans", Arial, sans-serif; color: #2c2e2f; }
.paypal-btn { display: flex; align-items: center; justify-content: center; height: 25px; border-radius: 13px; background: #ffc439; }
.paypal-btn svg { width: 10px; height: 12px; margin-right: 4px; }
.pp { font: italic 800 13.300px "Open Sans", "Noto Sans", sans-serif; color: #003087; }
.pp .pal { color: #0a9bdb; }
.co { font-size: 9.800px; margin: -1px 0 0 3px; }
.paypal-note { font-size: 10px; line-height: 13px; text-align: center; color: #000; }
.add { width: 139px; border-radius: 0 4px 4px 0; }
.footer { flex: none; height: 60px; line-height: 60px; border-top: 1px solid #dee2e6; padding-left: 405px; color: #6c757d; letter-spacing: .2px; }

/* taskbar */
.taskbar { flex: none; display: flex; align-items: center; height: 60px; background: #1c1c1c; border-top: 1px solid #45484a; color: #fff; }
.taskbar p { font-size: 14px; line-height: 20px; white-space: nowrap; }
.widget { display: flex; align-items: center; gap: 9px; width: 420px; padding: 0 0 3px 25px; }
.widget svg { width: 30px; height: 30px; }
.widget .sub { color: #c9c9c9; }
.start { width: 29px; height: 29px; }
.taskbar-search { display: flex; align-items: center; width: 273px; height: 40px; margin-left: 18px; padding: 0 6px 0 13px; border-radius: 20px; background: #363636; border: 1px solid #404040; }
.mag { width: 18px; height: 18px; margin-right: 13px; }
.taskbar-search span { font-size: 16px; color: #ccc; }
.bing { width: 25px; height: 25px; margin-left: auto; }
.apps { display: flex; margin-left: 3.500px; height: 100%; padding-bottom: 1px; }
.app { position: relative; width: 55px; display: flex; align-items: center; justify-content: center; }
.app svg { width: 30px; height: 30px; }
.badge { position: absolute; left: 29px; top: 8px; width: 20px; height: 20px; border-radius: 50%; font-size: 13.500px; line-height: 20px; text-align: center; }
.blue { background: #4cc2ff; color: #111; }
.orange { background: #e96900; color: #ffd9b8; font-size: 11px; }
.pink { background: #c2185b; color: #f5b5cd; font-size: 11px; }
.running::after, .current::after { content: ""; position: absolute; left: 23.500px; top: 49px; width: 8px; height: 4px; border-radius: 2px; background: #9a9a9a; }
.current::before { content: ""; position: absolute; left: 2.500px; top: 4px; width: 50px; height: 50px; border-radius: 5px; background: #2a2a2a; border: 1px solid #333; }
.current svg { position: relative; width: 26px; }
.current::after { left: 17.500px; width: 20px; background: #4cc2ff; }
.tray { display: flex; align-items: center; margin-left: auto; padding: 0 24px 3px 0; }
.chev { width: 14px; height: 8px; margin-right: 23px; }
.wifi { width: 20px; height: 16px; margin-right: 10px; }
.sound { width: 20px; height: 18px; margin-right: 10px; }
.battery { width: 20px; height: 18px; }
.clock { width: 98px; text-align: right; }
.taskbar .clock p { font-size: 14.800px; letter-spacing: -.1px; }
```
